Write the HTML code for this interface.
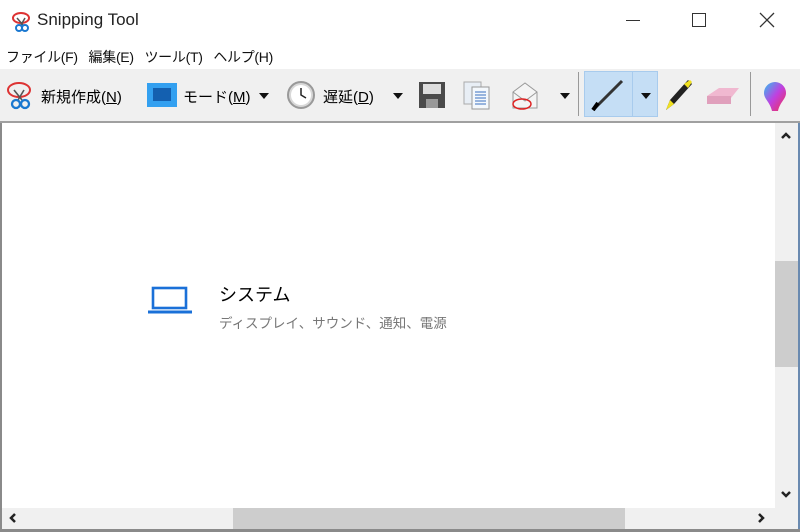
<!DOCTYPE html>
<html><head><meta charset="utf-8"><style>
*{margin:0;padding:0;box-sizing:border-box}
body{width:800px;height:532px;overflow:hidden;background:#fff;font-family:"Liberation Sans","Noto Sans CJK JP",sans-serif;position:relative;color:#000}
.a{position:absolute}
.t{font-size:15px;white-space:nowrap}
</style></head><body>
<svg class="a" style="left:10px;top:9px" width="24" height="24" viewBox="0 0 24 24"><path d="M3 9a8 5 0 1 1 16 0a8 5 0 1 1-16 0" fill="none" stroke="#d33" stroke-width="2"/><path d="M7 9l6 7M15 9l-4 7" stroke="#555" stroke-width="1.5"/><circle cx="9" cy="19" r="3" fill="none" stroke="#1a78d0" stroke-width="2"/><circle cx="15" cy="19" r="3" fill="none" stroke="#1a78d0" stroke-width="2"/></svg>
<div class="a t" style="left:37px;top:10px;font-size:17px;color:#222">Snipping Tool</div>
<div class="a" style="left:626px;top:20px;width:14px;height:1px;background:#333"></div>
<div class="a" style="left:692px;top:13px;width:14px;height:14px;border:1.5px solid #333"></div>
<svg class="a" style="left:759px;top:12px" width="16" height="16"><path d="M1 1L15 15M15 1L1 15" stroke="#333" stroke-width="1.3"/></svg>
<div class="a t" style="left:6px;top:47px;color:#111;font-size:14px;letter-spacing:-0.3px">ファイル(F)&nbsp;&nbsp;&nbsp;編集(E)&nbsp;&nbsp;&nbsp;ツール(T)&nbsp;&nbsp;&nbsp;ヘルプ(H)</div>
<div class="a" style="left:0;top:69px;width:800px;height:52px;background:#f0f0f0"></div>
<div class="a" style="left:0;top:121px;width:800px;height:2px;background:#a0a0a0"></div>
<svg class="a" style="left:5px;top:80px" width="32" height="30" viewBox="0 0 32 30"><path d="M3 10a11 7 0 1 1 22 0a11 7 0 1 1-22 0" fill="none" stroke="#d33" stroke-width="2"/><path d="M9 10l8 10M19 10l-6 10" stroke="#555" stroke-width="1.6"/><circle cx="11" cy="24" r="4" fill="none" stroke="#1a78d0" stroke-width="2.3"/><circle cx="20" cy="24" r="4" fill="none" stroke="#1a78d0" stroke-width="2.3"/></svg>
<div class="a t" style="left:41px;top:86px">新規作成(<u>N</u>)</div>
<div class="a" style="left:147px;top:83px;width:30px;height:24px;background:#33a0f0"></div>
<div class="a" style="left:153px;top:88px;width:18px;height:13px;background:#1460b0"></div>
<div class="a t" style="left:183px;top:86px">モード(<u>M</u>)</div>
<div class="a" style="left:259px;top:93px;border:5px solid transparent;border-top:6px solid #111"></div>
<svg class="a" style="left:286px;top:80px" width="30" height="30"><circle cx="15" cy="15" r="13" fill="#d8d8d8" stroke="#999" stroke-width="2"/><circle cx="15" cy="15" r="10" fill="#fff"/><path d="M15 8v7l5 3" stroke="#222" stroke-width="1.5" fill="none"/></svg>
<div class="a t" style="left:323px;top:86px">遅延(<u>D</u>)</div>
<div class="a" style="left:393px;top:93px;border:5px solid transparent;border-top:6px solid #111"></div>
<svg class="a" style="left:418px;top:81px" width="28" height="28"><rect x="1" y="1" width="26" height="26" fill="#4a4a4a"/><rect x="5" y="3" width="18" height="10" fill="#ddd"/><rect x="8" y="18" width="12" height="9" fill="#999"/></svg>
<svg class="a" style="left:462px;top:80px" width="30" height="30"><rect x="2" y="2" width="17" height="22" fill="#e8eef5" stroke="#aaa"/><rect x="10" y="7" width="17" height="22" fill="#f4f8fc" stroke="#999"/><path d="M13 12h11M13 15h11M13 18h11M13 21h11M13 24h11" stroke="#3a70c0"/></svg>
<svg class="a" style="left:507px;top:80px" width="36" height="32"><path d="M6 12l12-9 12 9v16H6z" fill="#f4f4f4" stroke="#999"/><path d="M6 12l12 9 12-9" fill="none" stroke="#999"/><ellipse cx="15" cy="24" rx="9" ry="5" fill="none" stroke="#d22" stroke-width="1.5"/></svg>
<div class="a" style="left:560px;top:93px;border:5px solid transparent;border-top:6px solid #111"></div>
<div class="a" style="left:578px;top:72px;width:1px;height:44px;background:#999"></div>
<div class="a" style="left:584px;top:71px;width:74px;height:46px;background:#c5def5;border:1px solid #a8cbed"></div>
<div class="a" style="left:632px;top:71px;width:1px;height:46px;background:#a8cbed"></div>
<svg class="a" style="left:588px;top:77px" width="40" height="36"><path d="M5 33L34 4" stroke="#333" stroke-width="3"/><path d="M5 33L10 26" stroke="#000" stroke-width="4"/></svg>
<div class="a" style="left:641px;top:93px;border:5px solid transparent;border-top:6px solid #111"></div>
<svg class="a" style="left:662px;top:78px" width="32" height="34"><path d="M4 32l4-10 18-20 4 4-18 20z" fill="#222"/><path d="M4 32l4-10 4 4z" fill="#f0e020"/><path d="M22 6l6-4 2 2-4 6z" fill="#f0e020"/></svg>
<svg class="a" style="left:705px;top:84px" width="36" height="24"><path d="M2 12l12-8h20l-8 10v6H2z" fill="#f0b8d0"/><path d="M2 12h24v8H2z" fill="#e0a0bc"/></svg>
<div class="a" style="left:750px;top:72px;width:1px;height:44px;background:#999"></div>
<svg class="a" style="left:762px;top:80px" width="26" height="32"><defs><linearGradient id="g" x1="0" y1="0" x2="1" y2="1"><stop offset="0" stop-color="#30c0f0"/><stop offset=".5" stop-color="#c040e0"/><stop offset="1" stop-color="#f03050"/></linearGradient></defs><path d="M13 2a11 11 0 0 1 11 11c0 6-6 9-8 18h-6c-2-9-8-12-8-18A11 11 0 0 1 13 2z" fill="url(#g)"/></svg>
<svg class="a" style="left:147px;top:285px" width="46" height="32"><rect x="6" y="3" width="33" height="20" fill="none" stroke="#1a70d8" stroke-width="2.6"/><path d="M1 27h44" stroke="#1a70d8" stroke-width="3"/></svg>
<div class="a" style="left:219px;top:281px;font-size:18px">システム</div>
<div class="a" style="left:219px;top:312px;font-size:13.5px;color:#777">ディスプレイ、サウンド、通知、電源</div>
<div class="a" style="left:0;top:123px;width:2px;height:409px;background:#8a8a8a"></div>
<div class="a" style="left:798px;top:123px;width:2px;height:409px;background:#6a8ab0"></div>
<div class="a" style="left:775px;top:123px;width:23px;height:385px;background:#f0f0f0"></div>
<div class="a" style="left:775px;top:261px;width:23px;height:106px;background:#cdcdcd"></div>
<svg class="a" style="left:780px;top:131px" width="12" height="10"><path d="M2 7l4-4 4 4" fill="none" stroke="#222" stroke-width="2.5"/></svg>
<svg class="a" style="left:780px;top:489px" width="12" height="10"><path d="M2 3l4 4 4-4" fill="none" stroke="#222" stroke-width="2.5"/></svg>
<div class="a" style="left:2px;top:508px;width:773px;height:21px;background:#f0f0f0"></div>
<div class="a" style="left:233px;top:508px;width:392px;height:21px;background:#cdcdcd"></div>
<svg class="a" style="left:8px;top:512px" width="10" height="12"><path d="M7 2L3 6l4 4" fill="none" stroke="#222" stroke-width="2.5"/></svg>
<svg class="a" style="left:756px;top:512px" width="10" height="12"><path d="M3 2l4 4-4 4" fill="none" stroke="#222" stroke-width="2.5"/></svg>
<div class="a" style="left:775px;top:508px;width:23px;height:21px;background:#f0f0f0"></div>
<div class="a" style="left:0;top:529px;width:800px;height:3px;background:#8a8a8a"></div>
</body></html>
